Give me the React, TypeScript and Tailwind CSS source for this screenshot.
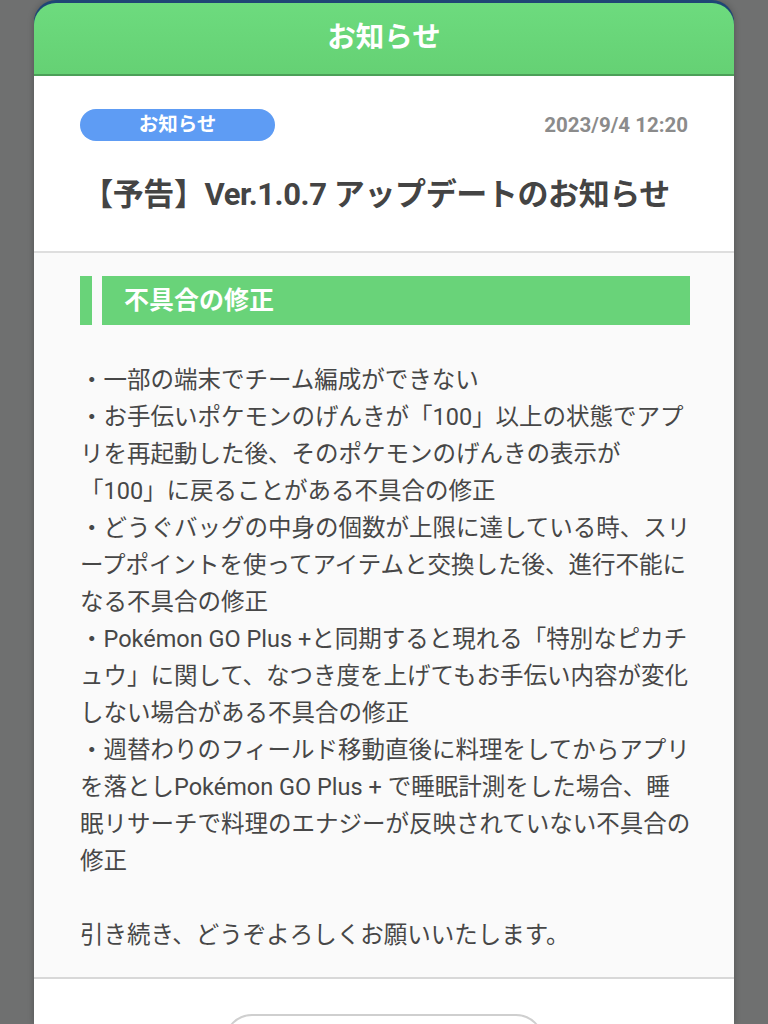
const lines: string[] = [
  "・一部の端末でチーム編成ができない",
  "・お手伝いポケモンのげんきが「100」以上の状態でアプ",
  "リを再起動した後、そのポケモンのげんきの表示が",
  "「100」に戻ることがある不具合の修正",
  "・どうぐバッグの中身の個数が上限に達している時、スリ",
  "ープポイントを使ってアイテムと交換した後、進行不能に",
  "なる不具合の修正",
  "・Pokémon GO Plus +と同期すると現れる「特別なピカチ",
  "ュウ」に関して、なつき度を上げてもお手伝い内容が変化",
  "しない場合がある不具合の修正",
  "・週替わりのフィールド移動直後に料理をしてからアプリ",
  "を落としPokémon GO Plus + で睡眠計測をした場合、睡",
  "眠リサーチで料理のエナジーが反映されていない不具合の",
  "修正",
  "",
  "引き続き、どうぞよろしくお願いいたします。",
];

export default function App() {
  return (
    <div
      className="w-[768px] h-[1024px] overflow-hidden bg-[#6f7070]"
      style={{ fontFamily: "Roboto, 'Noto Sans CJK JP', sans-serif" }}
    >
      <div className="mx-[34px] h-full flex flex-col rounded-t-[22px] bg-[#1f4675] shadow-[0_0_6px_rgba(0,0,0,0.25)]">
        {/* header */}
        <div className="mt-[3px] h-[73px] shrink-0 flex items-center justify-center rounded-t-[22px] bg-gradient-to-b from-[#6ddb7e] to-[#65d174] border-b-2 border-[#4c9f58]">
          <span className="text-white text-[28.5px] font-bold">お知らせ</span>
        </div>

        {/* top info */}
        <div className="bg-white shrink-0 pl-[46px] pr-[46px] pt-[33px] h-[177px] border-b-2 border-[#dedede]">
          <div className="flex items-center justify-between">
            <div className="w-[195px] h-[32px] rounded-full bg-[#5e9cf4] flex items-center justify-center">
              <span className="text-white text-[19.5px] font-bold">お知らせ</span>
            </div>
            <span className="text-[#8b8b8b] text-[20.5px] font-bold">2023/9/4 12:20</span>
          </div>
          <div className="mt-[31px] pr-[16px] text-center text-[#444444] text-[31px] font-bold tracking-[-0.4px] whitespace-nowrap">
            【予告】Ver.1.0.7 アップデートのお知らせ
          </div>
        </div>

        {/* body */}
        <div className="bg-[#fafafa] shrink-0 pl-[46px] pr-[44px] pt-[23px] pb-[23px] border-b-2 border-[#d8d8d8]">
          <div className="flex h-[49px] gap-[10px]">
            <div className="w-[12px] bg-[#69d379]" />
            <div className="flex-1 bg-[#69d379] flex items-center pl-[22px]">
              <span className="text-white text-[25px] font-bold">不具合の修正</span>
            </div>
          </div>
          <div className="mt-[37px] text-[#474747] text-[23.5px] leading-[37px]">
            {lines.map((l, i) => (
              <div key={i} className="whitespace-nowrap h-[37px]">
                {l}
              </div>
            ))}
          </div>
        </div>

        {/* footer */}
        <div className="bg-white flex-1 flex justify-center pt-[35px]">
          <div className="w-[320px] h-[56px] rounded-[28px] border-2 border-[#cfcfcf] bg-white" />
        </div>
      </div>
    </div>
  );
}
